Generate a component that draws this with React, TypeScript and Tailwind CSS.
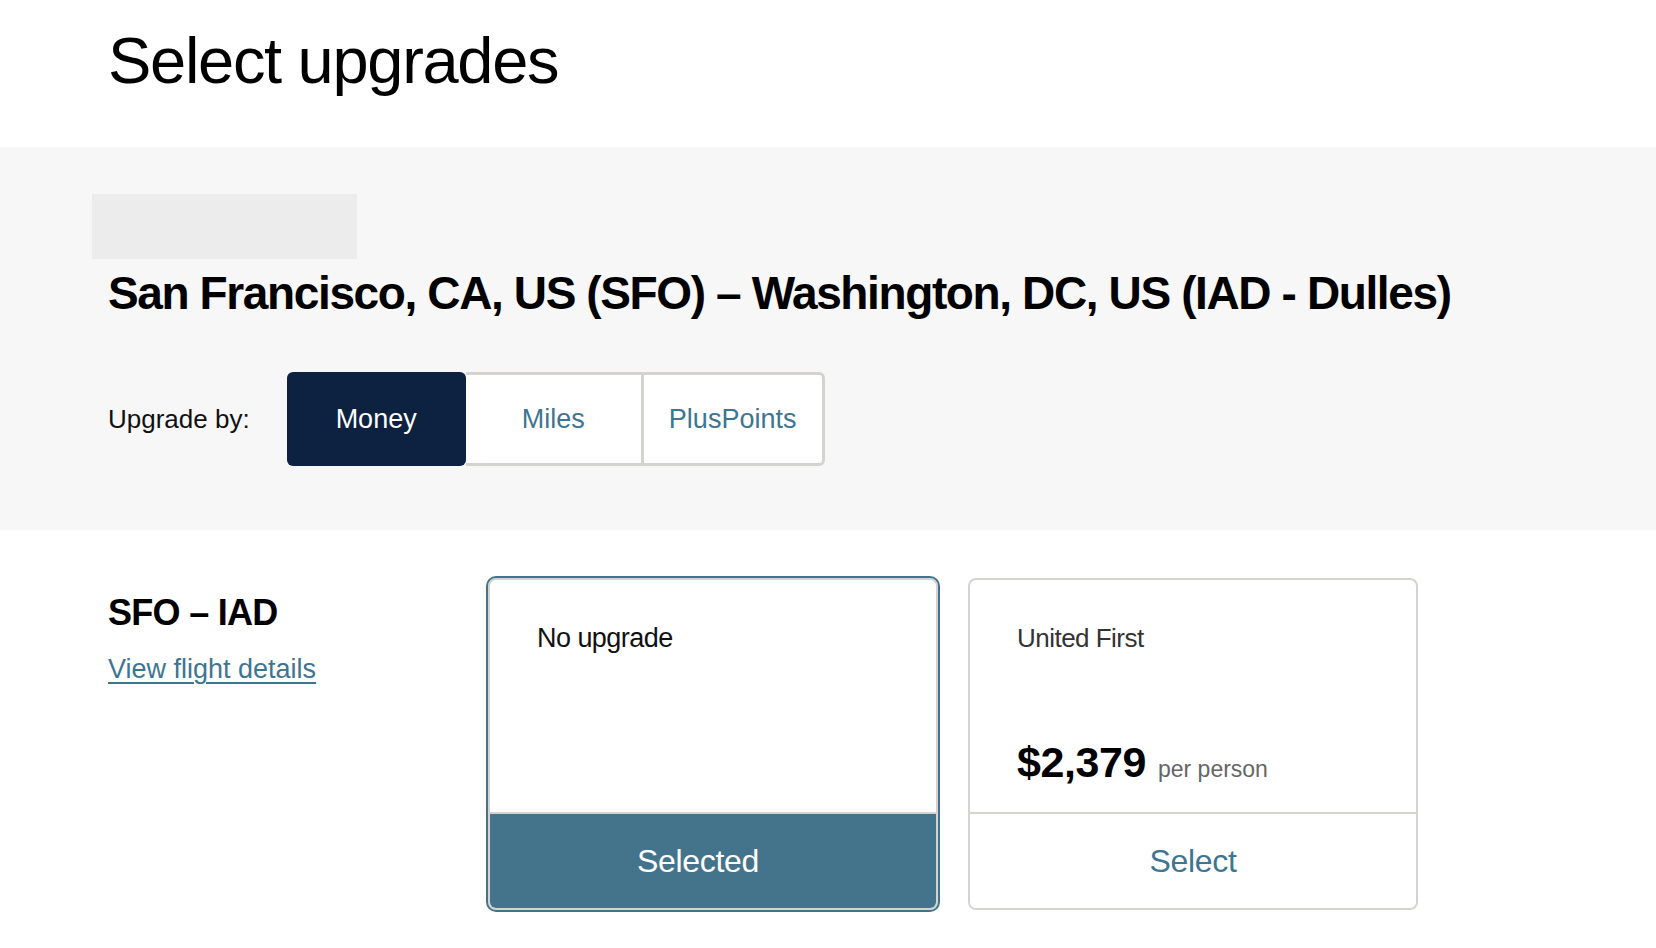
const font = { fontFamily: '"Liberation Sans", Arial, sans-serif' }

function ModeToggle() {
  return (
    <div className="flex items-center">
      <span className="text-[26px] leading-none text-[#111]">Upgrade by:</span>
      <div className="ml-[37px] flex h-[94px]">
        <button className="w-[179px] h-full rounded-[6px] bg-[#0d2240] text-white text-[27px] leading-none">
          Money
        </button>
        <button className="w-[178px] h-full border-y-[3px] border-r-[3px] border-[#d4d3cf] bg-white text-[#3e7591] text-[27px] leading-none">
          Miles
        </button>
        <button className="w-[181px] h-full border-y-[3px] border-r-[3px] border-[#d4d3cf] rounded-r-[6px] bg-white text-[#3e7591] text-[27px] leading-none">
          PlusPoints
        </button>
      </div>
    </div>
  )
}

function FareCard({ name, price, selected }: { name: string; price?: string; selected?: boolean }) {
  return (
    <div
      className={
        selected
          ? 'w-[450px] h-[332px] flex flex-col rounded-[8px] border-2 border-[#d4d3cf] outline-2 outline-[#44748c] overflow-hidden bg-white'
          : 'w-[450px] h-[332px] flex flex-col rounded-[8px] border-2 border-[#d4d3cf] overflow-hidden bg-white'
      }
    >
      <div className="h-[232px] flex flex-col justify-between pl-[47px] pt-[45px] pb-[28px]">
        <span className={selected ? 'text-[27px] leading-none tracking-[-0.02em] text-[#111]' : 'text-[26px] leading-none tracking-[-0.02em] text-[#333]'}>
          {name}
        </span>
        {price && (
          <div className="flex items-baseline gap-[12px]">
            <span className="text-[43px] leading-none font-bold tracking-[-0.01em] text-black">{price}</span>
            <span className="text-[23px] leading-none text-[#666]">per person</span>
          </div>
        )}
      </div>
      <div
        className={
          selected
            ? 'flex-1 flex items-center justify-center pr-[30px] border-t-2 border-[#d4d3cf] bg-[#44748c] text-white text-[32px] leading-none tracking-[-0.01em]'
            : 'flex-1 flex items-center justify-center border-t-2 border-[#d4d3cf] bg-white text-[#3e7591] text-[32px] leading-none tracking-[-0.01em]'
        }
      >
        {selected ? 'Selected' : 'Select'}
      </div>
    </div>
  )
}

export default function App() {
  return (
    <div className="w-[1656px] h-[948px] bg-white overflow-hidden" style={font}>
      {/* Page title */}
      <header className="h-[147px] pl-[108px] pt-[28px]">
        <h1 className="text-[65px] leading-none tracking-[-0.02em] text-black">Select upgrades</h1>
      </header>

      {/* Route band */}
      <section className="bg-[#f7f7f7] pl-[108px] pt-[47px] pb-[64px]">
        <div className="-ml-4 w-[265px] h-[65px] bg-[#ececec]" />
        <h2 className="mt-[11px] text-[46px] leading-none font-bold tracking-[-0.03em] text-black">
          San Francisco, CA, US (SFO) – Washington, DC, US (IAD - Dulles)
        </h2>
        <div className="mt-[56px]">
          <ModeToggle />
        </div>
      </section>

      {/* Segment */}
      <section className="flex pl-[108px] pt-[48px]">
        <div className="w-[380px] pt-[17px] flex flex-col">
          <span className="text-[36px] leading-none font-bold tracking-[-0.02em] text-black">SFO – IAD</span>
          <a href="#" className="mt-[25px] text-[27px] leading-none text-[#3e7591] underline underline-offset-[4px] decoration-[1.5px] self-start">
            View flight details
          </a>
        </div>
        <div className="flex gap-[30px]">
          <FareCard name="No upgrade" selected />
          <FareCard name="United First" price="$2,379" />
        </div>
      </section>
    </div>
  )
}
